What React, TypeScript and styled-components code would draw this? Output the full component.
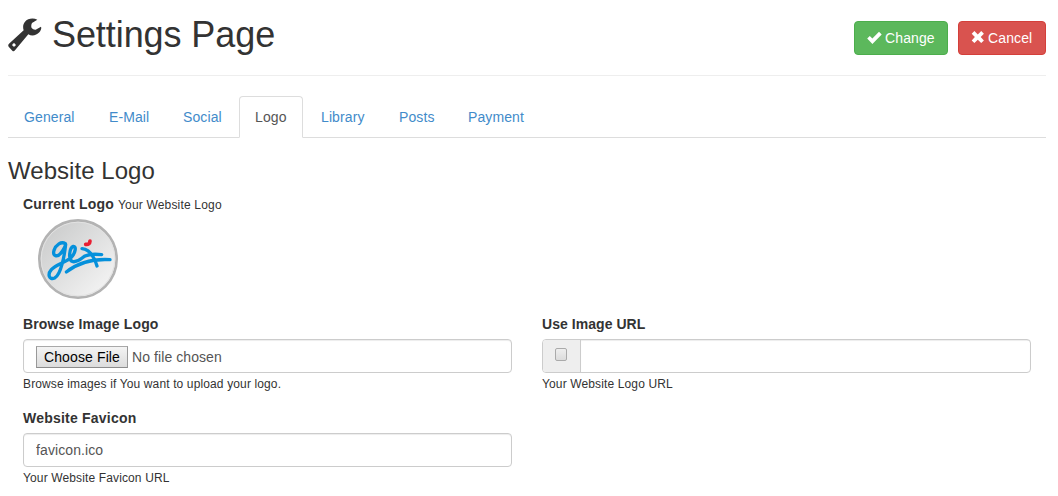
import React from "react";
import styled, { createGlobalStyle } from "styled-components";

const GlobalStyle = createGlobalStyle`
  *, *::before, *::after { box-sizing: border-box; }
  body {
    margin: 0;
    background: #fff;
    color: #333;
    font: 14px/20px "Liberation Sans", Arial, sans-serif;
  }
`;

const Page = styled.main`
  width: 1058px;
  height: 496px;
  padding: 0 12px 0 8px;
  overflow: hidden;
`;

const Header = styled.header`
  display: flex;
  justify-content: space-between;
  align-items: flex-start;
  height: 76px;
  border-bottom: 1px solid #eee;
`;

const Title = styled.h1`
  display: flex;
  margin: 15px 0 0;
  font-size: 36px;
  font-weight: 400;
  line-height: 40px;
  letter-spacing: -0.08px;

  svg { margin: 3px 10px 0 0; }
`;

const Actions = styled.div`
  display: flex;
  gap: 10px;
  margin-top: 21px;
`;

const Button = styled.button<{ $tone: "success" | "danger" }>`
  display: flex;
  align-items: center;
  gap: 3px;
  width: ${(p) => (p.$tone === "success" ? 94 : 88)}px;
  height: 34px;
  padding: 0 0 0 12px;
  border: 1px solid ${(p) => (p.$tone === "success" ? "#4cae4c" : "#d43f3a")};
  border-radius: 4px;
  background: ${(p) => (p.$tone === "success" ? "#5cb85c" : "#d9534f")};
  color: #fff;
  font: inherit;
  letter-spacing: 0.12px;
  white-space: nowrap;
`;

const Tabs = styled.nav`
  display: flex;
  gap: 2px;
  height: 42px;
  margin-top: 20px;
  border-bottom: 1px solid #ddd;
`;

const Tab = styled.a<{ $active?: boolean; $width: number }>`
  width: ${(p) => p.$width}px;
  height: 42px;
  padding: 10px 15px;
  border: 1px solid transparent;
  border-color: ${(p) => (p.$active ? "#ddd #ddd #fff" : "transparent")};
  border-radius: 4px 4px 0 0;
  background: ${(p) => (p.$active ? "#fff" : "transparent")};
  color: ${(p) => (p.$active ? "#555" : "#428bca")};
  letter-spacing: 0.1px;
  white-space: nowrap;
`;

const SectionTitle = styled.h3`
  margin: 20px 0 10px;
  font-size: 24px;
  font-weight: 400;
  line-height: 26px;
  letter-spacing: 0.05px;
`;

const Section = styled.section`
  padding: 0 15px;
`;

const CurrentLogo = styled.div`
  height: 120px;

  svg { display: block; margin: 4px 0 0 15px; }
`;

const Columns = styled.div`
  display: grid;
  grid-template-columns: 489px 489px;
  column-gap: 30px;
  row-gap: 14px;
`;

const Field = styled.div`
  display: flex;
  flex-direction: column;
  height: 80px;
`;

const Label = styled.label<{ $spacing?: number }>`
  font-weight: 700;
  letter-spacing: ${(p) => p.$spacing ?? 0.15}px;
`;

const Help = styled.small`
  font-size: 12px;
  line-height: 20px;
  letter-spacing: 0.18px;

  ${Field} > & { padding-top: 1px; letter-spacing: 0.13px; }
`;

const Control = styled.div`
  display: flex;
  align-items: center;
  flex: none;
  height: 34px;
  margin-top: 5px;
  padding: 0 12px;
  border: 1px solid #ccc;
  border-radius: 4px;
  box-shadow: inset 0 1px 1px rgba(0, 0, 0, 0.075);
  color: #555;
`;

const FileStatus = styled.span`
  padding-top: 2px;
  letter-spacing: 0.08px;
`;

const TextInput = styled.input`
  flex: 1;
  min-width: 0;
  padding: 0;
  border: 0;
  outline: 0;
  background: transparent;
  color: #555;
  font: inherit;
  letter-spacing: 0.1px;
`;

const FileButton = styled.button`
  width: 92px;
  height: 22px;
  margin: 2px 4px 0 0;
  padding: 0;
  border: 1px solid #a0a0a0;
  border-color: #a9a9a9 #999 #8c8c8c;
  background: linear-gradient(#f4f4f4, #dcdcdc);
  color: #000;
  font: inherit;
  letter-spacing: 0.12px;
  line-height: 20px;
  white-space: nowrap;
`;

const InputGroup = styled(Control)`
  padding: 0;
  overflow: hidden;
  box-shadow: none;
`;

const Addon = styled.span`
  display: flex;
  width: 38px;
  height: 32px;
  padding: 8px 0 0 12px;
  border-right: 1px solid #ccc;
  background: #eee;
`;

const Checkbox = styled.input.attrs({ type: "checkbox" })`
  appearance: none;
  width: 12px;
  height: 13px;
  margin: 0;
  border: 1px solid #aaa;
  border-radius: 2px;
  background: linear-gradient(#eee, #dcdcdc);
`;

const UrlInput = styled(TextInput)`
  height: 32px;
  padding: 0 12px;
  box-shadow: inset 0 1px 1px rgba(0, 0, 0, 0.075);
`;

const WrenchIcon = () => (
  <svg width="34" height="34" viewBox="0 0 102 102" fill="#333">
    <path
      fillRule="evenodd"
      d="M88 5 C76 -1 59 1 51 11 C45 18 44 27 47 37 L3 77 Q-1 81 2 86 L13 98 Q17 102 21 97 L61 49 C72 56 86 52 94 43 C99 37 101 31 99 26 L83 35 Q76 36 71 30 Q68 23 72 15 Z M18 76 A5 5 0 1 1 17.9 76 Z"
    />
  </svg>
);

const CheckIcon = () => (
  <svg width="15" height="14" viewBox="0 0 15 14">
    <path d="M0.2 7.6 L2.8 5 L5.4 7.5 L12 0.8 L14.7 3.4 L5.4 13 Z" fill="#fff" />
  </svg>
);

const CrossIcon = () => (
  <svg width="14" height="14" viewBox="0 0 14 14">
    <path
      d="M3.4 .1 L6.8 3.4 L10.2 .1 L12.9 2.8 L9.7 6 L12.9 9.4 L10.2 12.1 L6.8 8.8 L3.4 12.1 L.7 9.4 L3.9 6 L.7 2.8 Z"
      fill="#fff"
    />
  </svg>
);

const SiteLogo = () => (
  <svg width="80" height="80" viewBox="24 21 240 240" fill="none">
    <defs>
      <linearGradient id="disc" x1="0" y1="0" x2="1" y2="1">
        <stop offset="0.1" stopColor="#cbcccc" />
        <stop offset="0.9" stopColor="#f4f4f4" />
      </linearGradient>
    </defs>
    <circle cx="144" cy="141" r="116" fill="url(#disc)" stroke="#b3b3b3" strokeWidth="8" />
    <circle cx="144" cy="141" r="110.5" stroke="#e2e2e2" strokeWidth="3" />
    <g stroke="#0590db" strokeWidth="10" strokeLinecap="round" strokeLinejoin="round">
      <path d="M106 95 C94 87 78 98 72 115 C67 133 82 136 92 124 C100 114 105 106 107 97 C104 125 94 188 74 198 C57 205 52 187 64 173 C79 157 107 152 124 136 C138 121 139 102 130 103 C118 107 113 145 129 149 C145 151 153 139 165 132 C180 125 197 126 215 128" />
      <path d="M156 110 C180 112 194 139 201 162" />
      <path d="M109 180 C143 153 188 140 240 143" />
    </g>
    <path d="M167 97 Q179 99 180 87" stroke="#e91f32" strokeWidth="11" strokeLinecap="round" />
  </svg>
);

const tabs = [
  { name: "General", width: 83 },
  { name: "E-Mail", width: 72 },
  { name: "Social", width: 70 },
  { name: "Logo", width: 64 },
  { name: "Library", width: 76 },
  { name: "Posts", width: 67 },
  { name: "Payment", width: 88 },
];

export default function App() {
  return (
    <>
      <GlobalStyle />
      <Page>
        <Header>
          <Title>
            <WrenchIcon />
            Settings Page
          </Title>
          <Actions>
            <Button $tone="success">
              <CheckIcon />
              Change
            </Button>
            <Button $tone="danger">
              <CrossIcon />
              Cancel
            </Button>
          </Actions>
        </Header>
        <Tabs>
          {tabs.map((tab) => (
            <Tab key={tab.name} $width={tab.width} $active={tab.name === "Logo"}>
              {tab.name}
            </Tab>
          ))}
        </Tabs>
        <SectionTitle>Website Logo</SectionTitle>
        <Section>
          <CurrentLogo>
            <Label $spacing={0.2}>Current Logo</Label> <Help>Your Website Logo</Help>
            <SiteLogo />
          </CurrentLogo>
          <Columns>
            <Field>
              <Label>Browse Image Logo</Label>
              <Control>
                <FileButton type="button">Choose File</FileButton>
                <FileStatus>No file chosen</FileStatus>
              </Control>
              <Help>Browse images if You want to upload your logo.</Help>
            </Field>
            <Field>
              <Label $spacing={0.05}>Use Image URL</Label>
              <InputGroup>
                <Addon>
                  <Checkbox />
                </Addon>
                <UrlInput type="text" />
              </InputGroup>
              <Help>Your Website Logo URL</Help>
            </Field>
            <Field>
              <Label $spacing={0.22}>Website Favicon</Label>
              <Control>
                <TextInput type="text" defaultValue="favicon.ico" />
              </Control>
              <Help>Your Website Favicon URL</Help>
            </Field>
          </Columns>
        </Section>
      </Page>
    </>
  );
}
